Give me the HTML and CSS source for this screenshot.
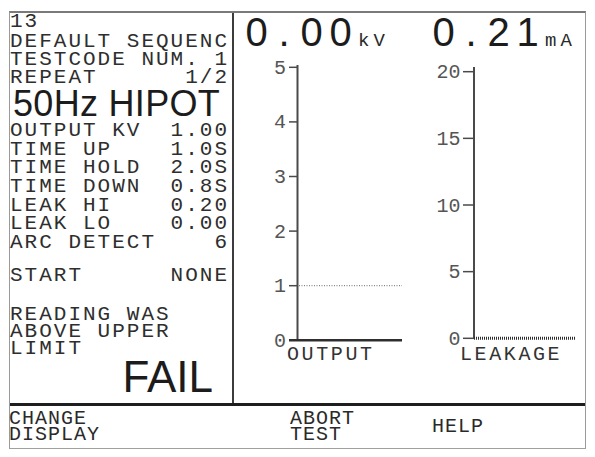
FILE: index.html
```html
<!DOCTYPE html>
<html lang="en">
<head>
<meta charset="utf-8">
<title>50Hz HIPOT</title>
<link rel="stylesheet" href="styles.css">
</head>
<body>
<div class="screen">
  <div class="main">
    <section class="params">
      <div class="line id">13</div>
      <div class="line">DEFAULT SEQUENC</div>
      <div class="line kv"><span>TESTCODE NUM.</span><span>1</span></div>
      <div class="line kv"><span>REPEAT</span><span>1/2</span></div>
      <h1 class="mode">50Hz HIPOT</h1>
      <ul class="settings">
        <li class="kv"><span>OUTPUT KV</span><span>1.00</span></li>
        <li class="kv"><span>TIME UP</span><span>1.0S</span></li>
        <li class="kv"><span>TIME HOLD</span><span>2.0S</span></li>
        <li class="kv"><span>TIME DOWN</span><span>0.8S</span></li>
        <li class="kv"><span>LEAK HI</span><span>0.20</span></li>
        <li class="kv"><span>LEAK LO</span><span>0.00</span></li>
        <li class="kv"><span>ARC DETECT</span><span>6</span></li>
      </ul>
      <div class="line kv start"><span>START</span><span>NONE</span></div>
      <p class="message">READING WAS<br>ABOVE UPPER<br>LIMIT</p>
      <div class="verdict">FAIL</div>
    </section>
    <section class="meters">
      <div class="readouts">
        <div class="readout first"><span class="d">0</span><span class="p">.</span><span class="d">0</span><span class="d">0</span><span class="unit">kV</span></div>
        <div class="readout"><span class="d">0</span><span class="p">.</span><span class="d">2</span><span class="d">1</span><span class="unit">mA</span></div>
      </div>
      <div class="charts">
        <figure class="chart output">
          <svg class="plot" width="176" height="300" viewBox="0 0 176 300">
            <line class="axis" x1="63.5" y1="7" x2="63.5" y2="282.3"/>
            <g class="ticks">
              <line x1="55" y1="9.3" x2="64" y2="9.3"/>
              <line x1="55" y1="63.9" x2="64" y2="63.9"/>
              <line x1="55" y1="118.5" x2="64" y2="118.5"/>
              <line x1="55" y1="173.1" x2="64" y2="173.1"/>
              <line x1="55" y1="227.7" x2="64" y2="227.7"/>
            </g>
            <g class="labels">
              <text x="52" y="15.8">5</text>
              <text x="52" y="70.4">4</text>
              <text x="52" y="125">3</text>
              <text x="52" y="179.6">2</text>
              <text x="52" y="234.2">1</text>
              <text x="52" y="288.8">0</text>
            </g>
            <line class="limit" x1="65" y1="227.7" x2="168" y2="227.7"/>
            <line class="base" x1="55" y1="282.3" x2="168" y2="282.3"/>
          </svg>
          <figcaption>OUTPUT</figcaption>
        </figure>
        <figure class="chart leakage">
          <svg class="plot" width="175" height="300" viewBox="0 0 175 300">
            <line class="axis" x1="64" y1="9" x2="64" y2="280.3"/>
            <g class="ticks">
              <line x1="53" y1="13.7" x2="64" y2="13.7"/>
              <line x1="53" y1="80.35" x2="64" y2="80.35"/>
              <line x1="53" y1="147" x2="64" y2="147"/>
              <line x1="53" y1="213.65" x2="64" y2="213.65"/>
              <line x1="53" y1="280.3" x2="64" y2="280.3"/>
            </g>
            <g class="labels">
              <text x="50.5" y="20.2">20</text>
              <text x="50.5" y="86.85">15</text>
              <text x="50.5" y="153.5">10</text>
              <text x="50.5" y="220.15">5</text>
              <text x="50.5" y="286.8">0</text>
            </g>
            <line class="reading" x1="64" y1="280.3" x2="165" y2="280.3"/>
          </svg>
          <figcaption>LEAKAGE</figcaption>
        </figure>
      </div>
    </section>
  </div>
  <footer class="keys">
    <div class="key">CHANGE<br>DISPLAY</div>
    <div class="key">ABORT<br>TEST</div>
    <div class="key">HELP</div>
  </footer>
</div>
</body>
</html>
```

FILE: styles.css
```css
* { box-sizing: content-box; }
html, body { margin: 0; padding: 0; background: #ffffff; }
body {
  width: 595px;
  height: 457px;
  overflow: hidden;
  color: #2e2e2e;
  font-family: "Liberation Mono", "DejaVu Sans Mono", monospace;
}
.screen {
  margin: 11px 0 0 9px;
  width: 575px;
  border-top: 2px solid #7a7a7a;
  border-left: 1px solid #9a9a9a;
  border-right: 1px solid #9a9a9a;
  border-bottom: 1px solid #a0a0a0;
}
.main {
  display: flex;
  height: 390px;
  border-bottom: 3px solid #1e1e1e;
}
.params {
  width: 219px;
  padding: 0 3px 0 0;
  border-right: 2px solid #3c3c3c;
  font-size: 21px;
  letter-spacing: 2px;
}
.line { height: 18px; line-height: 18px; white-space: pre; }
.line.id { height: 20px; }
.kv { display: flex; justify-content: space-between; white-space: pre; }
.mode {
  margin: 0;
  padding-left: 3px;
  height: 34px;
  line-height: 34px;
  font-family: "Liberation Sans", Arial, sans-serif;
  font-weight: normal;
  font-size: 36px;
  letter-spacing: 0.3px;
  color: #1c1c1c;
}
.settings { list-style: none; margin: 1px 0 0; padding: 0; }
.settings li { height: 18.7px; line-height: 18.7px; }
.start { margin-top: 14px; }
.message { margin: 21px 0 0; line-height: 17px; }
.verdict {
  height: 40px;
  line-height: 40px;
  margin-top: 0;
  padding-right: 16px;
  text-align: right;
  font-family: "Liberation Sans", Arial, sans-serif;
  font-size: 44px;
  letter-spacing: 0;
  color: #1c1c1c;
}
.meters { width: 351px; display: flex; flex-direction: column; }
.readouts {
  display: grid;
  grid-template-columns: 187px auto;
  height: 38px;
  padding-left: 8px;
  margin-bottom: 7px;
  line-height: 38px;
}
.readout { display: flex; align-items: baseline; }
.readout .d, .readout .p {
  display: inline-block;
  text-align: center;
  font-family: "Liberation Sans", Arial, sans-serif;
  font-size: 40px;
  color: #1c1c1c;
}
.readout .d { width: 29px; }
.readout .p { width: 26px; }
.readout .unit {
  margin-left: 3px;
  font-size: 19px;
  letter-spacing: 4px;
  color: #2a2a2a;
}
.charts { display: flex; }
.chart { margin: 0; width: 176px; }
.chart.leakage { width: 175px; }
.plot { display: block; }
.plot .axis { stroke: #4a4a4a; stroke-width: 2; }
.plot .ticks line { stroke: #4a4a4a; stroke-width: 1.5; }
.plot .labels text {
  font-family: "Liberation Mono", "DejaVu Sans Mono", monospace;
  font-size: 20px;
  fill: #555555;
  text-anchor: end;
}
.plot .limit { stroke: #6a6a6a; stroke-width: 1; stroke-dasharray: 1 1.5; }
.plot .base { stroke: #2e2e2e; stroke-width: 2.5; }
.plot .reading { stroke: #2e2e2e; stroke-width: 3; stroke-dasharray: 1 1; }
figcaption {
  margin-top: -12px;
  font-size: 20px;
  letter-spacing: 2.6px;
  line-height: 18px;
  color: #333333;
}
.output figcaption { padding-left: 53px; }
.leakage figcaption { padding-left: 50px; }
.keys {
  display: grid;
  grid-template-columns: 280px 142px 1fr;
  align-items: center;
  height: 42px;
  font-size: 20px;
  letter-spacing: 1px;
  line-height: 16.5px;
  color: #2a2a2a;
}
.key:first-child { margin-left: -1px; }
```
